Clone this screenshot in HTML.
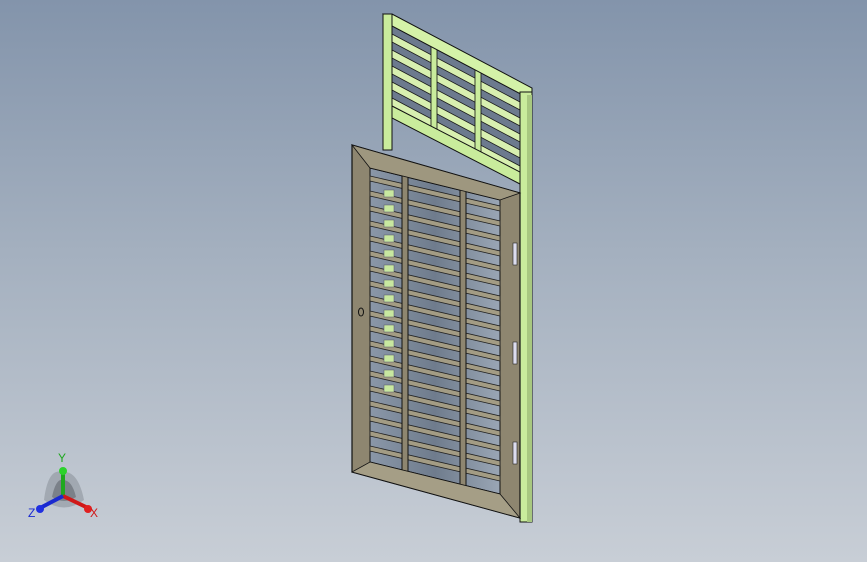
<!DOCTYPE html>
<html><head><meta charset="utf-8"><style>
html,body{margin:0;padding:0;width:867px;height:562px;overflow:hidden}
body{background:linear-gradient(180deg,#8394ab 0%,#a4b0bf 45%,#c8ced6 100%);}
svg{position:absolute;left:0;top:0}
</style></head><body>
<svg width="867" height="562" viewBox="0 0 867 562">
<defs>
<linearGradient id="hole" x1="0" y1="0" x2="1" y2="0">
<stop offset="0" stop-color="#8a97a8"/><stop offset="0.5" stop-color="#6f7c8d"/><stop offset="1" stop-color="#9aa6b5"/></linearGradient>
<g id="gs"><polygon points="392,0 520,68 520,76 392,8" fill="#d8f0b0" stroke="#1a1a1a" stroke-width="0.8"/></g>
<g id="ds"><polygon points="370,0 500,30 500,35 370,5" fill="#a39c84" stroke="#222" stroke-width="0.8"/></g>
<g id="sp"><rect x="384" y="7" width="10" height="7" fill="#c8e8a0" stroke="#556" stroke-width="0.5"/></g>
</defs>
<!-- green transom frame -->
<polygon points="392,26 520,94 520,172 392,106" fill="#6c7a8e"/>
<use href="#gs" y="34"/><use href="#gs" y="50"/><use href="#gs" y="66"/><use href="#gs" y="82"/><use href="#gs" y="98"/>
<rect x="431" y="44" width="6" height="86" fill="#c9ec9c" stroke="#111" stroke-width="0.8"/>
<rect x="475" y="67" width="6" height="90" fill="#c9ec9c" stroke="#111" stroke-width="0.8"/>
<polygon points="383,14 392,14 532,88 532,100 392,26" fill="#d4f2a8" stroke="#111" stroke-width="1"/>
<rect x="383" y="14" width="9" height="136" fill="#c9ec9c" stroke="#111" stroke-width="1"/>
<polygon points="392,106 520,172 520,184 392,118" fill="#c9ec9c" stroke="#111" stroke-width="1"/>
<rect x="520" y="92" width="12" height="430" fill="#c9ec9c" stroke="#111" stroke-width="1"/>
<rect x="527" y="95" width="5" height="427" fill="#a8c880"/>
<!-- door -->
<polygon points="352,145 520,193 520,518 352,472" fill="#8e8670" stroke="#111" stroke-width="1.2"/>
<polygon points="370,168 500,200 500,494 370,462" fill="url(#hole)" stroke="#111" stroke-width="1"/>
<use href="#ds" y="176"/><use href="#ds" y="191"/><use href="#ds" y="206"/><use href="#ds" y="221"/><use href="#ds" y="236"/><use href="#ds" y="251"/><use href="#ds" y="266"/><use href="#ds" y="281"/><use href="#ds" y="296"/><use href="#ds" y="311"/><use href="#ds" y="326"/><use href="#ds" y="341"/><use href="#ds" y="356"/><use href="#ds" y="371"/><use href="#ds" y="386"/><use href="#ds" y="401"/><use href="#ds" y="416"/><use href="#ds" y="431"/><use href="#ds" y="446"/>
<use href="#sp" y="183"/><use href="#sp" y="198"/><use href="#sp" y="213"/><use href="#sp" y="228"/><use href="#sp" y="243"/><use href="#sp" y="258"/><use href="#sp" y="273"/><use href="#sp" y="288"/><use href="#sp" y="303"/><use href="#sp" y="318"/><use href="#sp" y="333"/><use href="#sp" y="348"/><use href="#sp" y="363"/><use href="#sp" y="378"/>
<rect x="402" y="176" width="6" height="296" fill="#8e8670" stroke="#111" stroke-width="1"/>
<rect x="460" y="190" width="6" height="296" fill="#8e8670" stroke="#111" stroke-width="1"/>
<polygon points="352,145 370,168 500,200 520,193" fill="#9e977f" stroke="#111" stroke-width="0.8"/>
<polygon points="352,472 370,462 500,494 520,518" fill="#a59e86" stroke="#111" stroke-width="0.8"/>
<ellipse cx="361" cy="312" rx="2.5" ry="4" fill="none" stroke="#111"/>
<rect x="513" y="243" width="4" height="22" fill="#dde" stroke="#222" stroke-width="0.6"/>
<rect x="513" y="342" width="4" height="22" fill="#dde" stroke="#222" stroke-width="0.6"/>
<rect x="513" y="442" width="4" height="22" fill="#dde" stroke="#222" stroke-width="0.6"/>
<!-- triad -->
<path d="M44,500 Q48,468 62,472 Q78,470 84,500 Q64,515 44,500Z" fill="#8e949c" opacity="0.6"/>
<path d="M52,497 Q56,478 63,480 Q72,480 76,497 Q64,505 52,497Z" fill="#6b7077" opacity="0.7"/>
<line x1="63" y1="496" x2="63" y2="473" stroke="#1fa81f" stroke-width="4"/>
<circle cx="63" cy="471" r="4" fill="#2cd22c"/>
<line x1="63" y1="496" x2="86" y2="507" stroke="#d01818" stroke-width="4"/>
<circle cx="88" cy="509" r="4" fill="#e02020"/>
<line x1="63" y1="496" x2="42" y2="507" stroke="#1a2ad0" stroke-width="4"/>
<circle cx="40" cy="509" r="4" fill="#2030e0"/>
<text x="58" y="462" font-family="Liberation Sans,sans-serif" font-size="12" fill="#1fa81f">Y</text>
<text x="90" y="517" font-family="Liberation Sans,sans-serif" font-size="12" fill="#d01818">X</text>
<text x="28" y="517" font-family="Liberation Sans,sans-serif" font-size="12" fill="#1a2ad0">Z</text>
</svg>
</body></html>
